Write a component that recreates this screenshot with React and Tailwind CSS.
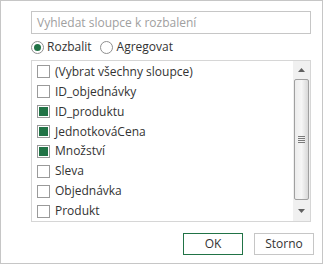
import React from 'react';

const items = [
  { label: '(Vybrat všechny sloupce)', checked: false },
  { label: 'ID_objednávky', checked: false },
  { label: 'ID_produktu', checked: true },
  { label: 'JednotkováCena', checked: true },
  { label: 'Množství', checked: true },
  { label: 'Sleva', checked: false },
  { label: 'Objednávka', checked: false },
  { label: 'Produkt', checked: false },
];

function Checkbox({ checked }) {
  return (
    <div className="w-[13px] h-[13px] border border-[#9a9a9a] bg-white flex items-center justify-center shrink-0">
      {checked && <div className="w-[9px] h-[9px] bg-[#217346]" />}
    </div>
  );
}

function Radio({ checked }) {
  return (
    <div className="w-[13px] h-[13px] rounded-full border border-[#8f8f8f] bg-white flex items-center justify-center shrink-0">
      {checked && <div className="w-[7px] h-[7px] rounded-full bg-[#217346]" />}
    </div>
  );
}

export default function App() {
  return (
    <div
      className="w-[323px] h-[264px] border border-[#c6c6c6] bg-white text-[#333333] text-[12px] flex flex-col pl-[30px] pt-[10px]"
      style={{ fontFamily: '"Open Sans", "Noto Sans", sans-serif' }}
    >
      <div className="w-[280px] h-[23px] border border-[#c6c6c6] flex items-center px-[5px] text-[#a0a0a0]">
        Vyhledat sloupce k rozbalení
      </div>

      <div className="flex items-center h-[26px]">
        <Radio checked />
        <span className="ml-[3px]">Rozbalit</span>
        <div className="ml-[8px]"><Radio /></div>
        <span className="ml-[4px]">Agregovat</span>
      </div>

      <div className="w-[280px] h-[162px] border border-[#d6d6d6] flex">
        <div className="flex-1 flex flex-col pl-[5px] pt-[1px]">
          {items.map((it) => (
            <div key={it.label} className="h-[20px] flex items-center">
              <Checkbox checked={it.checked} />
              <span className="ml-[5px] leading-none">{it.label}</span>
            </div>
          ))}
        </div>
        <div className="w-[17px] bg-[#f0f0f0] flex flex-col items-center">
          <div className="h-[18px] w-full flex items-center justify-center">
            <svg width="7" height="4" viewBox="0 0 7 4"><path d="M3.5 0 L7 4 L0 4 Z" fill="#606060" /></svg>
          </div>
          <div className="w-[15px] h-[121px] rounded-[2px] border border-[#a0a0a0] bg-gradient-to-r from-[#ececec] via-[#f6f6f6] to-[#d8d8d8] flex items-center justify-center">
            <div className="flex flex-col gap-[1px]">
              <div className="w-[7px] h-[1px] bg-[#7a7a7a]" />
              <div className="w-[7px] h-[1px] bg-[#7a7a7a]" />
              <div className="w-[7px] h-[1px] bg-[#7a7a7a]" />
              <div className="w-[7px] h-[1px] bg-[#7a7a7a]" />
            </div>
          </div>
          <div className="flex-1 w-full flex items-center justify-center">
            <svg width="7" height="4" viewBox="0 0 7 4"><path d="M0 0 L7 0 L3.5 4 Z" fill="#606060" /></svg>
          </div>
        </div>
      </div>

      <div className="flex mt-[11px] ml-[152px] gap-[11px]">
        <div className="w-[60px] h-[22px] border border-[#217346] flex items-center justify-center">OK</div>
        <div className="w-[60px] h-[22px] border border-[#c6c6c6] flex items-center justify-center">Storno</div>
      </div>
    </div>
  );
}
